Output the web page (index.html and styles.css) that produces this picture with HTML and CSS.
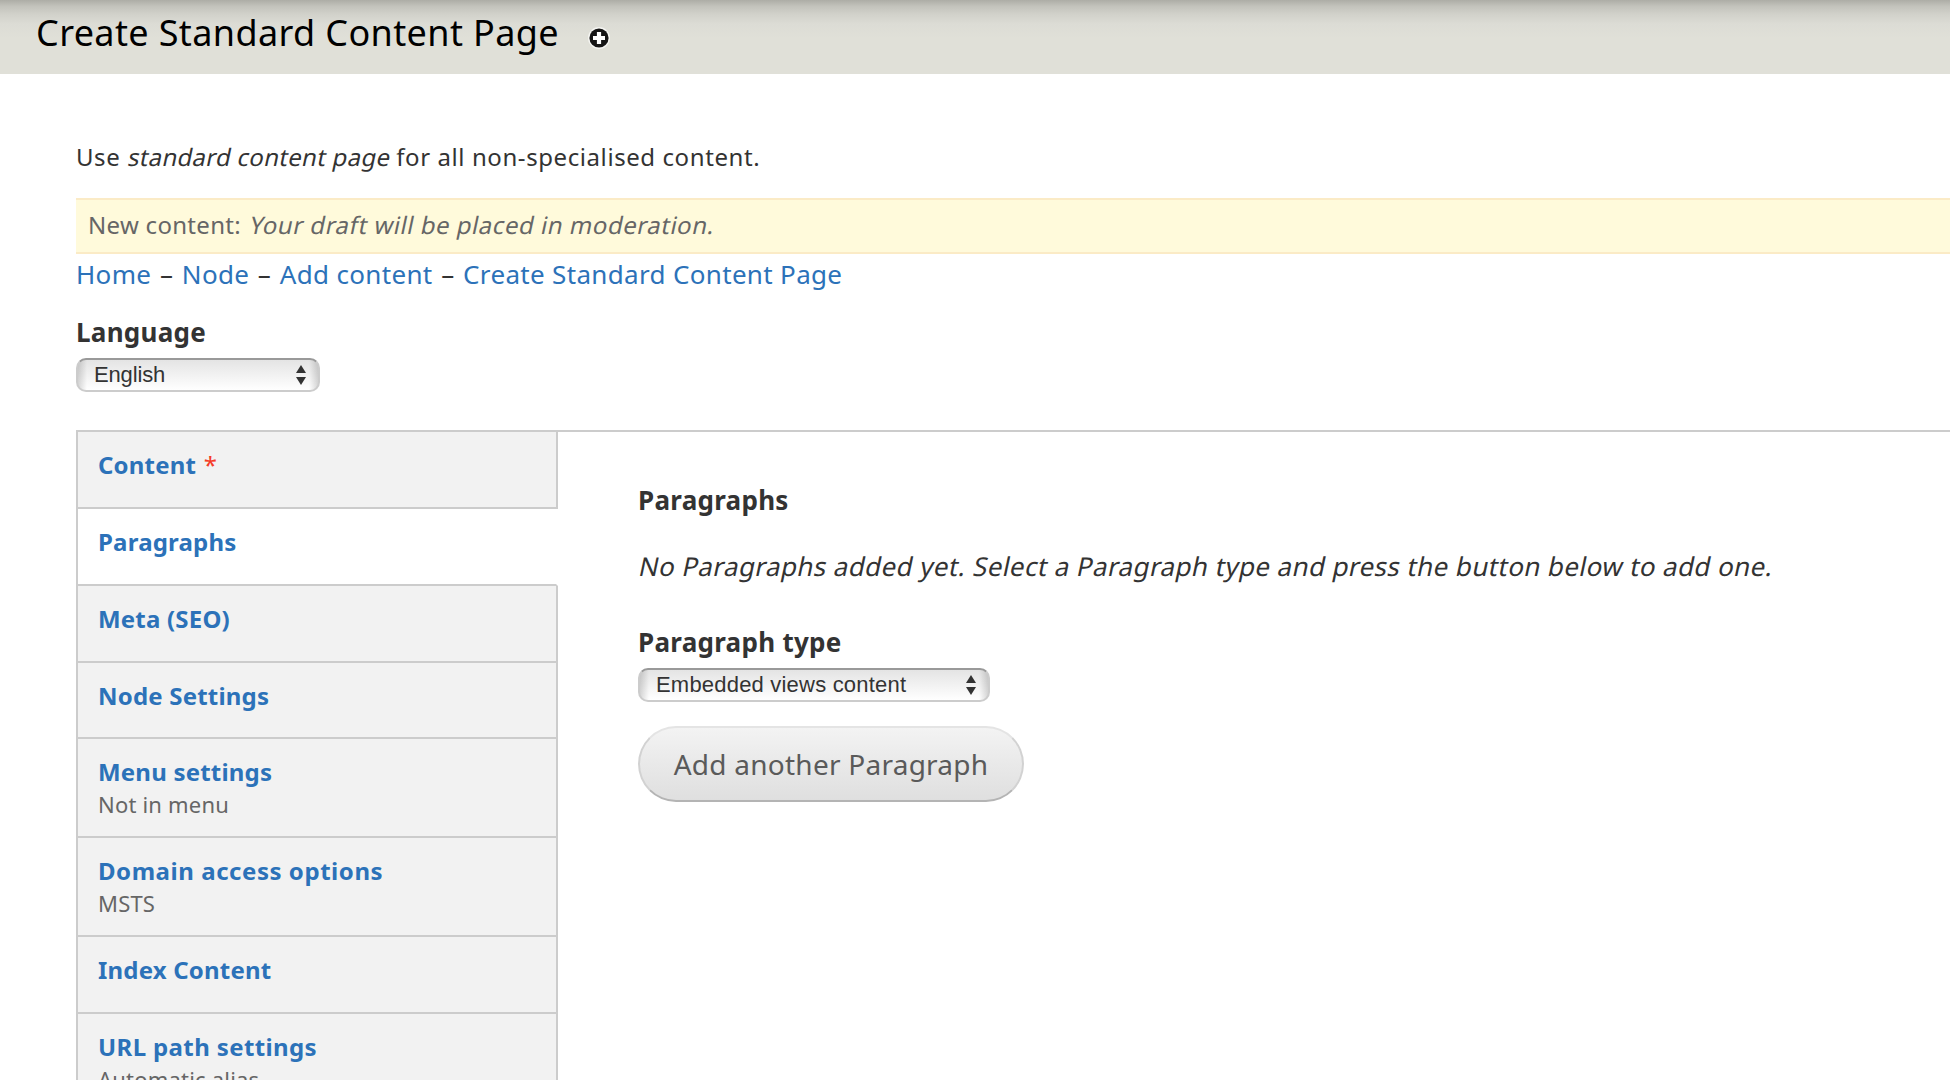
FILE: index.html
```html
<!DOCTYPE html>
<html lang="en">
<head>
<meta charset="utf-8">
<title>Create Standard Content Page</title>
<link rel="stylesheet" href="styles.css">
</head>
<body>
<header class="branding">
  <h1 class="page-title">Create Standard Content Page</h1>
  <svg class="add-shortcut" width="24" height="24" viewBox="0 0 24 24"><circle cx="12" cy="12" r="11" fill="#f4f4f1"/><circle cx="12" cy="12" r="9.6" fill="#151515"/><path d="M12 6v12M6 12h12" stroke="#fff" stroke-width="4.2"/></svg>
</header>
<main class="page">
  <p class="help">Use <em>standard content page</em> for all non-specialised content.</p>
  <div class="message">New content: <em>Your draft will be placed in moderation.</em></div>
  <nav class="breadcrumb"><a>Home</a> – <a>Node</a> – <a>Add content</a> – <a>Create Standard Content Page</a></nav>
  <label class="label">Language</label>
  <div class="select select-language"><span>English</span><svg class="arrows" width="10" height="20" viewBox="0 0 10 20"><path d="M5 0l5 8H0zM5 20l5-8H0z"/></svg></div>
  <div class="vertical-tabs">
    <ul class="tabs">
      <li class="tab"><strong>Content</strong> <span class="required">*</span></li>
      <li class="tab selected"><strong>Paragraphs</strong></li>
      <li class="tab"><strong>Meta (SEO)</strong></li>
      <li class="tab tab-node"><strong>Node Settings</strong></li>
      <li class="tab"><strong>Menu settings</strong><span class="summary">Not in menu</span></li>
      <li class="tab"><strong class="wide">Domain access options</strong><span class="summary">MSTS</span></li>
      <li class="tab"><strong>Index Content</strong></li>
      <li class="tab"><strong class="medium">URL path settings</strong><span class="summary">Automatic alias</span></li>
    </ul>
    <section class="pane">
      <h2 class="label">Paragraphs</h2>
      <p class="empty"><em>No Paragraphs added yet. Select a Paragraph type and press the button below to add one.</em></p>
      <label class="label">Paragraph type</label>
      <div class="select select-type"><span>Embedded views content</span><svg class="arrows" width="10" height="20" viewBox="0 0 10 20"><path d="M5 0l5 8H0zM5 20l5-8H0z"/></svg></div>
      <button class="button">Add another Paragraph</button>
    </section>
  </div>
</main>
</body>
</html>
```
FILE: styles.css
```css
* { box-sizing: border-box; }
body { margin: 0; height: 1080px; overflow: hidden; background: #fff; color: #333; font-family: "Noto Sans", sans-serif; font-size: 24px; letter-spacing: .2px; }
h1, h2, p, ul { margin: 0; padding: 0; }
em { display: inline-block; font-style: normal; transform: skewX(-12deg); transform-origin: 0 75%; }
.branding { height: 74px; display: flex; padding: 13px 0 0 36px; background: linear-gradient(#adada6 0, #c2c2bb 6px, #d1d1ca 14px, #dcdcd5 24px, #e0e0d8 38px); }
.page-title { font-size: 36px; line-height: 40px; font-weight: 400; letter-spacing: .38px; color: #000; }
.add-shortcut { margin: 13px 0 0 28px; }
.page { padding-left: 76px; }
.help { padding-top: 68px; line-height: 30px; height: 124px; letter-spacing: .58px; }
.help em { letter-spacing: .28px; }
.message { height: 56px; border: solid #fbebc6; border-width: 2px 0; background: #fffadb; color: #666; line-height: 49px; padding-left: 12px; letter-spacing: .3px; }
.message em { letter-spacing: .53px; }
.breadcrumb { font-size: 26px; line-height: 40px; height: 62px; letter-spacing: .33px; word-spacing: 1.5px; }
.breadcrumb a { color: #2c72b9; word-spacing: 0; }
.label { display: block; font-size: 26px; line-height: 32px; font-weight: 700; height: 42px; letter-spacing: .28px; }
.select { display: flex; justify-content: space-between; height: 34px; padding: 0 12px 0 16px; border: 2px solid #ccc; border-top-color: #999; border-radius: 10px; background: linear-gradient(90deg, rgba(0,0,0,.15), transparent 9px, transparent calc(100% - 9px), rgba(0,0,0,.15)), linear-gradient(#e4e4e4, #fff); font: 22px/30px "Liberation Sans", sans-serif; }
.arrows { margin-top: 5px; fill: #333; }
.select-language { width: 244px; letter-spacing: -.15px; }
.select-type { width: 352px; letter-spacing: .2px; }
.vertical-tabs { display: flex; margin-top: 38px; border-top: 2px solid #ccc; }
.tabs { width: 482px; border-left: 2px solid #ccc; list-style: none; flex: none; }
.tab { height: 77px; border: solid #ccc; border-width: 0 2px 2px 0; padding: 17px 0 0 20px; line-height: 32px; background: #f2f2f2; }
.tab strong { color: #2c72b9; }
.tab .wide { letter-spacing: .55px; }
.tab .medium { letter-spacing: .38px; }
.tab-node { height: 76px; }
.tab:has(.summary) { height: 99px; }
.selected { background: #fff; border-right-color: transparent; }
.required { margin-left: 1px; color: #f53c28; }
.summary { display: block; font-size: 22px; color: #666; }
.pane { padding: 52px 0 0 80px; flex: 1; }
.empty { font-size: 26px; line-height: 32px; margin: 24px 0 44px; letter-spacing: .39px; }
.button { display: block; width: 386px; height: 76px; margin-top: 24px; padding: 0; border: 2px solid #ccc; border-color: #e4e4e4 #d2d2d2 #b4b4b4; border-radius: 38px; background: linear-gradient(#f3f3f3, #dfdfdf); color: #5a5a5a; font: 28px/32px "Noto Sans", sans-serif; letter-spacing: .25px; }
```
